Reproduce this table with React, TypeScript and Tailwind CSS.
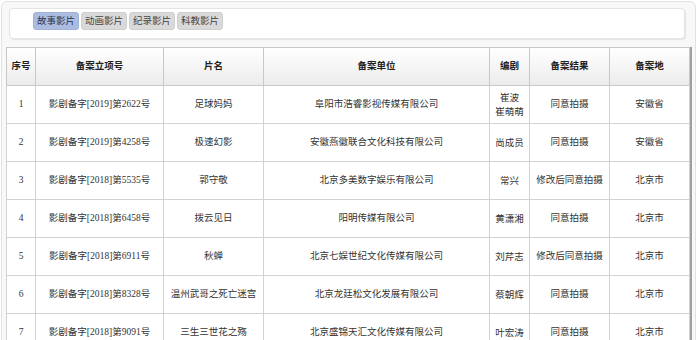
import React from "react";

type Row = {
  no: number;
  code: string;
  title: string;
  unit: string;
  writer: string[];
  result: string;
  place: string;
};

const rows: Row[] = [
  { no: 1, code: "影剧备字[2019]第2622号", title: "足球妈妈", unit: "阜阳市浩睿影视传媒有限公司", writer: ["崔波", "崔萌萌"], result: "同意拍摄", place: "安徽省" },
  { no: 2, code: "影剧备字[2019]第4258号", title: "极速幻影", unit: "安徽燕徽联合文化科技有限公司", writer: ["尚成员"], result: "同意拍摄", place: "安徽省" },
  { no: 3, code: "影剧备字[2018]第5535号", title: "郭守敬", unit: "北京多美数字娱乐有限公司", writer: ["常兴"], result: "修改后同意拍摄", place: "北京市" },
  { no: 4, code: "影剧备字[2018]第6458号", title: "拨云见日", unit: "阳明传媒有限公司", writer: ["黄潇湘"], result: "同意拍摄", place: "北京市" },
  { no: 5, code: "影剧备字[2018]第6911号", title: "秋蝉", unit: "北京七娱世纪文化传媒有限公司", writer: ["刘芹志"], result: "修改后同意拍摄", place: "北京市" },
  { no: 6, code: "影剧备字[2018]第8328号", title: "温州武哥之死亡迷宫", unit: "北京龙廷松文化发展有限公司", writer: ["蔡朝辉"], result: "同意拍摄", place: "北京市" },
  { no: 7, code: "影剧备字[2018]第9091号", title: "三生三世花之殇", unit: "北京盛锦天汇文化传媒有限公司", writer: ["叶宏涛"], result: "同意拍摄", place: "北京市" },
];

const tabs = ["故事影片", "动画影片", "纪录影片", "科教影片"];

const cols = ["序号", "备案立项号", "片名", "备案单位", "编剧", "备案结果", "备案地"];
const widths = ["w-[29px]", "w-[128px]", "w-[100px]", "w-[226px]", "w-[40px]", "w-[80px]", "w-[80px]"];

const App: React.FC = () => {
  return (
    <div className="w-[699px] h-[340px] overflow-hidden bg-white pt-px pl-px text-[#333]" style={{ fontFamily: '"Liberation Serif", "Noto Sans CJK SC", sans-serif' }}>
      <div className="w-[695px] min-h-[400px] rounded-md border border-[#e2e2e2] bg-[#f8f8f8] pt-[6px] pl-[4px]">
        {/* 分类标签 */}
        <div className="ml-[3px] w-[676px] h-[31px] rounded border border-[#e4e4e4] bg-white shadow-[1px_1px_1px_rgba(0,0,0,0.08)] pl-[23px] pt-[3px] flex gap-[2px]">
          {tabs.map((t, i) => (
            <span
              key={t}
              className={
                i === 0
                  ? "h-[18px] px-[3px] flex items-center rounded-[3px] border border-[#9fb2d8] bg-[#abbce0] text-[9.5px] text-[#2a3550]"
                  : "h-[18px] px-[3px] flex items-center rounded-[3px] border border-[#cfcfcf] bg-[#d9d9d9] text-[9.5px] text-[#444]"
              }
            >
              {t}
            </span>
          ))}
        </div>

        <table className="mt-[8px] w-[683px] table-fixed border-collapse border border-[#c4c4c4] bg-white shadow-[2px_0_0_#9f9f9f] text-[9.5px]">
          <thead>
            <tr className="h-[38px] bg-gradient-to-b from-white to-[#ebebeb]">
              {cols.map((c, i) => (
                <th key={c} className={`${widths[i]} border border-[#c8c8c8] text-center align-middle font-bold text-[#222]`}>
                  {c}
                </th>
              ))}
            </tr>
          </thead>
          <tbody>
            {rows.map((r) => (
              <tr key={r.no} className="h-[38px]">
                <td className="border border-[#d2d2d2] text-center align-middle">{r.no}</td>
                <td className="border border-[#d2d2d2] text-center align-middle">{r.code}</td>
                <td className="border border-[#d2d2d2] text-center align-middle">{r.title}</td>
                <td className="border border-[#d2d2d2] text-center align-middle">{r.unit}</td>
                <td className="border border-[#d2d2d2] text-center align-middle leading-[14px]">
                  {r.writer.map((w) => (
                    <div key={w}>{w}</div>
                  ))}
                </td>
                <td className="border border-[#d2d2d2] text-center align-middle">{r.result}</td>
                <td className="border border-[#d2d2d2] text-center align-middle">{r.place}</td>
              </tr>
            ))}
          </tbody>
        </table>
      </div>
    </div>
  );
};

export default App;
